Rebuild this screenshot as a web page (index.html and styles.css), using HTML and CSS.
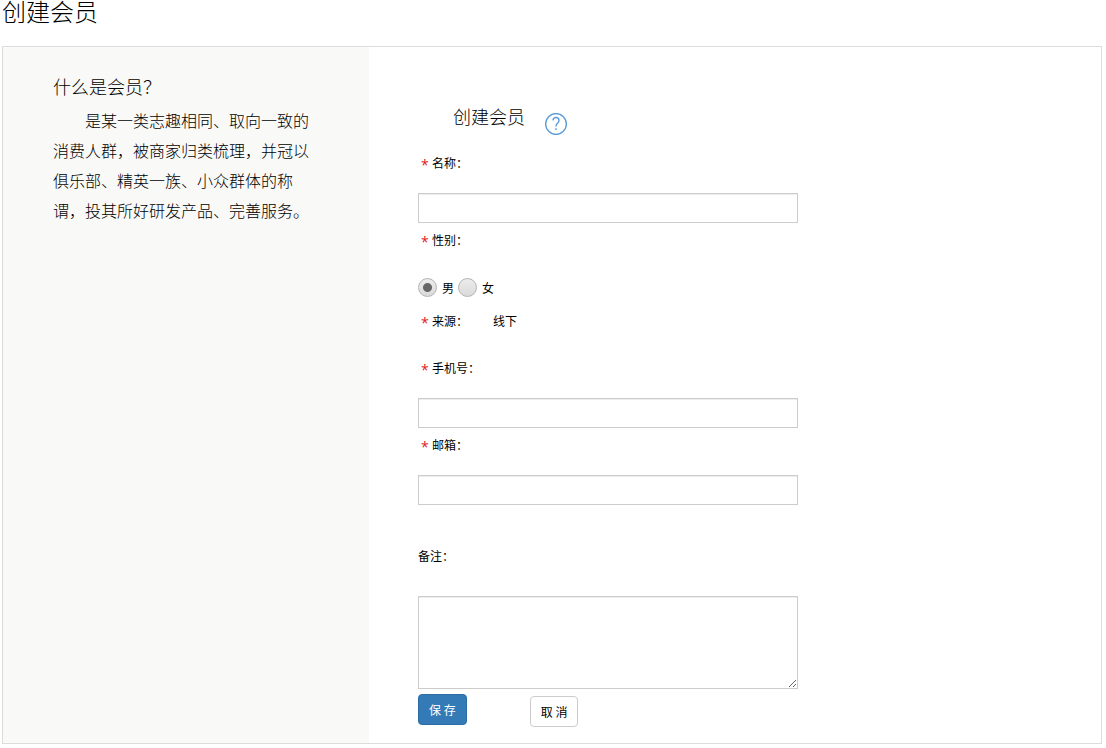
FILE: index.html
```
<!DOCTYPE html>
<html lang="zh-CN">
<head>
    <meta charset="UTF-8">
    <title>创建会员</title>
    <link rel="stylesheet" href="styles.css">
</head>
<body>

<h1 class="page-title">创建会员</h1>

<div class="panel">
    <aside class="intro">
        <h2>什么是会员？</h2>
        <p>是某一类志趣相同、取向一致的消费人群，被商家归类梳理，并冠以俱乐部、精英一族、小众群体的称谓，投其所好研发产品、完善服务。</p>
    </aside>

    <form class="member-form" id="memberForm">
        <div class="form-title">
            <h2>创建会员</h2>
            <svg class="help-icon" viewBox="0 0 22 22" role="img" aria-label="帮助">
                <circle cx="11" cy="11" r="10.4" />
                <path d="M8 7.4C8.2 5.4 9.4 4.5 11 4.5C12.8 4.5 14 5.6 14 7.4C14 8.9 13.2 9.7 12.3 10.5C11.5 11.2 11 11.8 11 13.4" />
                <path d="M11 15.2V17" />
            </svg>
        </div>

        <div class="form-group">
            <label for="name"><span class="required">*</span>名称：</label>
            <input type="text" class="form-control" name="name" id="name">
        </div>
        <div class="form-group" role="radiogroup" aria-labelledby="genderLabel">
            <div class="label" id="genderLabel"><span class="required">*</span>性别：</div>
            <div class="radio-row">
                <input type="radio" name="gender" id="male" value="male" checked>
                <label for="male">男</label>
                <input type="radio" name="gender" id="female" value="female">
                <label for="female">女</label>
            </div>
        </div>
        <div class="form-group source">
            <div class="label"><span class="required">*</span>来源：</div>
            <span class="source-value">线下</span>
        </div>
        <div class="form-group">
            <label for="phone"><span class="required">*</span>手机号：</label>
            <input type="text" class="form-control" name="phone" id="phone">
        </div>
        <div class="form-group">
            <label for="email"><span class="required">*</span>邮箱：</label>
            <input type="text" class="form-control" name="email" id="email">
        </div>
        <div class="form-group remark">
            <label for="remark">备注：</label>
            <textarea class="form-control" name="remark" id="remark"></textarea>
        </div>

        <div class="actions">
            <button type="submit" class="btn btn-primary">保 存</button>
            <button type="button" class="btn btn-default">取 消</button>
        </div>
    </form>
</div>

</body>
</html>
```

FILE: styles.css
```
* {
    box-sizing: border-box;
}

body {
    margin: 0;
    padding: 0 4px 4px 2px;
    background: #fff;
    color: #000;
    font-family: "Noto Sans CJK SC", sans-serif;
    font-size: 12px;
}

h1,
h2,
p {
    margin: 0;
    font-weight: 300;
}

.page-title {
    font-size: 24px;
    line-height: 22px;
    margin-bottom: 24px;
}

.panel {
    display: flex;
    border: 1px solid #dcdcdc;
}

/* left description */
.intro {
    flex: 0 0 33.3333%;
    padding: 27px 50px;
    background: #f9f9f7;
}

.intro h2,
.form-title h2 {
    font-size: 18px;
    line-height: 24px;
}

.intro h2 {
    margin-bottom: 7px;
}

.intro p {
    font-size: 16px;
    line-height: 30px;
    text-indent: 2em;
}

/* form */
.member-form {
    flex: 1;
    padding: 57px 49px 16px;
}

.form-title {
    display: flex;
    align-items: flex-start;
    gap: 20px;
    padding-left: 35px;
    margin-bottom: 13px;
}

.help-icon {
    width: 22px;
    height: 22px;
    margin-top: 9px;
    fill: none;
    stroke: #5b9bd9;
    stroke-width: 1.4;
}

.form-group {
    margin-bottom: 2px;
}

.form-group > label,
.form-group > .label {
    display: block;
    line-height: 30px;
    margin-bottom: 15px;
}

.required {
    display: inline-block;
    width: 14px;
    padding-left: 3px;
    color: #e02020;
    font-family: "Open Sans", sans-serif;
    font-size: 14px;
    line-height: 1;
    vertical-align: middle;
}

.form-control {
    display: block;
    width: 100%;
    max-width: 380px;
    height: 30px;
    padding: 4px 6px;
    border: 1px solid #ccc;
    border-radius: 0;
    background: #fff;
    box-shadow: inset 0 1px 1px rgba(0, 0, 0, 0.075);
    font: inherit;
}

.radio-row {
    display: flex;
    align-items: center;
    height: 34px;
}

.radio-row input {
    appearance: none;
    width: 19px;
    height: 19px;
    margin: 0 5px 0 0;
    border: 1px solid #b4b4b4;
    border-radius: 50%;
    background: linear-gradient(#ececec, #dadada);
}

.radio-row input:checked {
    background: radial-gradient(circle, #666 4px, transparent 5px), linear-gradient(#ececec, #dadada);
}

.radio-row label {
    margin-right: 4px;
}

.source {
    display: flex;
}

.source-value {
    margin-left: 25px;
    line-height: 30px;
}

.remark {
    margin-top: 36px;
    margin-bottom: 5px;
}

.remark > label {
    margin-bottom: 25px;
}

textarea.form-control {
    height: 93px;
    resize: both;
}

.actions {
    display: flex;
    align-items: flex-start;
    gap: 63px;
}

.btn {
    height: 31px;
    padding: 0 10px;
    border: 1px solid #ccc;
    border-radius: 4px;
    background: #fff;
    color: #000;
    font: inherit;
    cursor: pointer;
}

.btn-primary {
    border-color: #2e6da4;
    background: #337ab7;
    color: #fff;
}

.btn-default {
    margin-top: 2px;
}
```
